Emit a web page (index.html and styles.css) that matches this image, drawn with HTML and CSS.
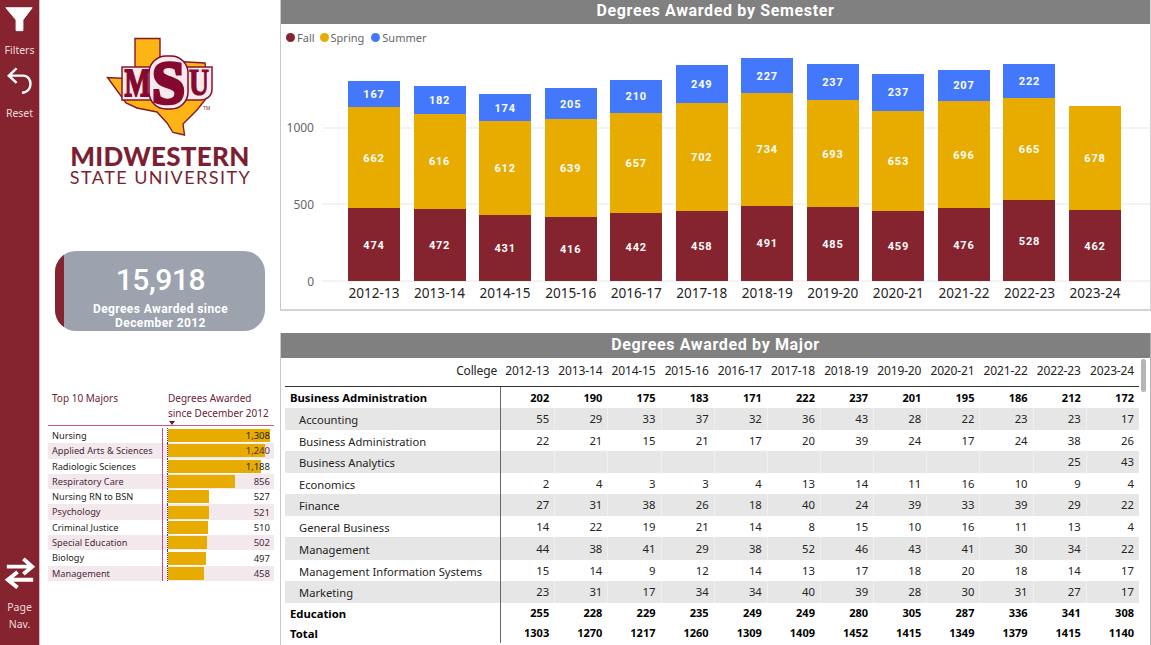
FILE: index.html
```html
<!DOCTYPE html>
<html lang="en">
<head>
<meta charset="utf-8">
<title>Degrees Awarded</title>
<link rel="stylesheet" href="styles.css">
</head>
<body>
<div class="page">
  <nav class="rail">
    <div class="rail-top">
      <svg class="ico-filter" viewBox="0 0 40 34"><path d="M6 7.500H33L23.500 20V31H16.500V20Z"/></svg>
      <span class="rail-text rail-filters">Filters</span>
      <svg class="ico-reset" viewBox="0 0 40 30"><path d="M17 2L9 9.500L17 17M9.500 9.500H23.500C34 9.500 34 27 22.500 27"/></svg>
      <span class="rail-text rail-reset">Reset</span>
    </div>
    <div class="rail-bottom">
      <svg class="ico-swap" viewBox="0 0 40 34"><path d="M7 11.500H33M24 3.500L33 11.500L24 19M34 25H8M18 17L8 25L18 33"/></svg>
      <span class="rail-text rail-page">Page</span>
      <span class="rail-text rail-nav">Nav.</span>
    </div>
  </nav>

  <aside class="left">
    <div class="logo">
      <svg class="logo-mark" viewBox="105 36 110 102">
        <path class="tx" d="M135 38.500H160V60L187 62L205 63L207 80L205 100L197 110L183 124L184.500 135L173 132.500L167 123L157 112L137 108L126 103L107.500 77.500L135 79Z"/>
        <path class="plate" d="M122 67H212V89C212 96 207 100 200 100H122Z"/>
        <text class="mk mk-m" x="124.500" y="96" textLength="26" lengthAdjust="spacingAndGlyphs">M</text>
        <text class="mk mk-u" x="189" y="95" textLength="20" lengthAdjust="spacingAndGlyphs">U</text>
        <rect class="s-back" x="149" y="56" width="39" height="53" rx="17"/>
        <text class="mk mk-s" x="152" y="103" textLength="33" lengthAdjust="spacingAndGlyphs">S</text>
        <text class="tm" x="203" y="110">TM</text>
      </svg>
      <div class="logo-name">MIDWESTERN</div>
      <div class="logo-sub">STATE UNIVERSITY</div>
    </div>

    <div class="kpi">
      <div class="kpi-stripe"></div>
      <div class="kpi-body">
        <div class="kpi-value">15,918</div>
        <div class="kpi-label">Degrees Awarded since<br>December 2012</div>
      </div>
    </div>

    <div class="top10">
      <div class="t-head">
        <div class="t-h1">Top 10 Majors</div>
        <div class="t-h2">Degrees Awarded<br>since December 2012<span class="sort"></span></div>
      </div>
      <div class="t-body">
        <div class="t-row"><span class="t-name">Nursing</span><span class="t-cell"><i class="t-bar" style="width:102px"></i><b class="t-num">1,308</b></span></div>
        <div class="t-row alt"><span class="t-name">Applied Arts &amp; Sciences</span><span class="t-cell"><i class="t-bar" style="width:96.500px"></i><b class="t-num">1,240</b></span></div>
        <div class="t-row"><span class="t-name">Radiologic Sciences</span><span class="t-cell"><i class="t-bar" style="width:93px"></i><b class="t-num">1,188</b></span></div>
        <div class="t-row alt"><span class="t-name">Respiratory Care</span><span class="t-cell"><i class="t-bar" style="width:67px"></i><b class="t-num">856</b></span></div>
        <div class="t-row"><span class="t-name">Nursing RN to BSN</span><span class="t-cell"><i class="t-bar" style="width:41px"></i><b class="t-num">527</b></span></div>
        <div class="t-row alt"><span class="t-name">Psychology</span><span class="t-cell"><i class="t-bar" style="width:40.600px"></i><b class="t-num">521</b></span></div>
        <div class="t-row"><span class="t-name">Criminal Justice</span><span class="t-cell"><i class="t-bar" style="width:39.800px"></i><b class="t-num">510</b></span></div>
        <div class="t-row alt"><span class="t-name">Special Education</span><span class="t-cell"><i class="t-bar" style="width:39px"></i><b class="t-num">502</b></span></div>
        <div class="t-row"><span class="t-name">Biology</span><span class="t-cell"><i class="t-bar" style="width:38px"></i><b class="t-num">497</b></span></div>
        <div class="t-row alt"><span class="t-name">Management</span><span class="t-cell"><i class="t-bar" style="width:35.500px"></i><b class="t-num">458</b></span></div>
      </div>
    </div>
  </aside>

  <main class="right">
    <section class="panel chart">
      <h2 class="title">Degrees Awarded by Semester</h2>
      <div class="legend">
        <span class="lg"><i class="dot fall"></i>Fall</span>
        <span class="lg"><i class="dot spring"></i>Spring</span>
        <span class="lg"><i class="dot summer"></i>Summer</span>
      </div>
      <div class="plot">
        <div class="grid-lines">
          <div class="gl"><span>1000</span><i></i></div>
          <div class="gl"><span>500</span><i></i></div>
          <div class="gl"><span>0</span><i></i></div>
        </div>
        <div class="bars">
          <div class="bar"><div class="seg summer" style="height:25.600px">167</div><div class="seg spring" style="height:101.500px">662</div><div class="seg fall" style="height:72.700px">474</div></div>
          <div class="bar"><div class="seg summer" style="height:27.900px">182</div><div class="seg spring" style="height:94.400px">616</div><div class="seg fall" style="height:72.400px">472</div></div>
          <div class="bar"><div class="seg summer" style="height:26.700px">174</div><div class="seg spring" style="height:93.800px">612</div><div class="seg fall" style="height:66.100px">431</div></div>
          <div class="bar"><div class="seg summer" style="height:31.400px">205</div><div class="seg spring" style="height:98px">639</div><div class="seg fall" style="height:63.800px">416</div></div>
          <div class="bar"><div class="seg summer" style="height:32.200px">210</div><div class="seg spring" style="height:100.700px">657</div><div class="seg fall" style="height:67.800px">442</div></div>
          <div class="bar"><div class="seg summer" style="height:38.200px">249</div><div class="seg spring" style="height:107.600px">702</div><div class="seg fall" style="height:70.200px">458</div></div>
          <div class="bar"><div class="seg summer" style="height:34.800px">227</div><div class="seg spring" style="height:112.500px">734</div><div class="seg fall" style="height:75.300px">491</div></div>
          <div class="bar"><div class="seg summer" style="height:36.300px">237</div><div class="seg spring" style="height:106.200px">693</div><div class="seg fall" style="height:74.400px">485</div></div>
          <div class="bar"><div class="seg summer" style="height:36.300px">237</div><div class="seg spring" style="height:100.100px">653</div><div class="seg fall" style="height:70.400px">459</div></div>
          <div class="bar"><div class="seg summer" style="height:31.700px">207</div><div class="seg spring" style="height:106.700px">696</div><div class="seg fall" style="height:73px">476</div></div>
          <div class="bar"><div class="seg summer" style="height:34px">222</div><div class="seg spring" style="height:101.900px">665</div><div class="seg fall" style="height:80.900px">528</div></div>
          <div class="bar"><div class="seg spring" style="height:103.900px">678</div><div class="seg fall" style="height:70.800px">462</div></div>
        </div>
      </div>
      <div class="xaxis">
        <span>2012-13</span><span>2013-14</span><span>2014-15</span><span>2015-16</span><span>2016-17</span><span>2017-18</span><span>2018-19</span><span>2019-20</span><span>2020-21</span><span>2021-22</span><span>2022-23</span><span>2023-24</span>
      </div>
    </section>

    <section class="panel matrix">
      <h2 class="title">Degrees Awarded by Major</h2>
      <div class="m-wrap">
        <table class="m-table">
          <colgroup><col class="c-label"><col span="12" class="c-num"></colgroup>
          <thead>
            <tr><th class="lab">College</th><th>2012-13</th><th>2013-14</th><th>2014-15</th><th>2015-16</th><th>2016-17</th><th>2017-18</th><th>2018-19</th><th>2019-20</th><th>2020-21</th><th>2021-22</th><th>2022-23</th><th>2023-24</th></tr>
          </thead>
          <tbody>
            <tr class="group r21"><td class="lab">Business Administration</td><td>202</td><td>190</td><td>175</td><td>183</td><td>171</td><td>222</td><td>237</td><td>201</td><td>195</td><td>186</td><td>212</td><td>172</td></tr>
            <tr class="shade r22"><td class="lab">Accounting</td><td>55</td><td>29</td><td>33</td><td>37</td><td>32</td><td>36</td><td>43</td><td>28</td><td>22</td><td>23</td><td>23</td><td>17</td></tr>
            <tr class="r21"><td class="lab">Business Administration</td><td>22</td><td>21</td><td>15</td><td>21</td><td>17</td><td>20</td><td>39</td><td>24</td><td>17</td><td>24</td><td>38</td><td>26</td></tr>
            <tr class="shade r22"><td class="lab">Business Analytics</td><td></td><td></td><td></td><td></td><td></td><td></td><td></td><td></td><td></td><td></td><td>25</td><td>43</td></tr>
            <tr class="r21"><td class="lab">Economics</td><td>2</td><td>4</td><td>3</td><td>3</td><td>4</td><td>13</td><td>14</td><td>11</td><td>16</td><td>10</td><td>9</td><td>4</td></tr>
            <tr class="shade r22"><td class="lab">Finance</td><td>27</td><td>31</td><td>38</td><td>26</td><td>18</td><td>40</td><td>24</td><td>39</td><td>33</td><td>39</td><td>29</td><td>22</td></tr>
            <tr class="r21"><td class="lab">General Business</td><td>14</td><td>22</td><td>19</td><td>21</td><td>14</td><td>8</td><td>15</td><td>10</td><td>16</td><td>11</td><td>13</td><td>4</td></tr>
            <tr class="shade r23"><td class="lab">Management</td><td>44</td><td>38</td><td>41</td><td>29</td><td>38</td><td>52</td><td>46</td><td>43</td><td>41</td><td>30</td><td>34</td><td>22</td></tr>
            <tr class="r21"><td class="lab">Management Information Systems</td><td>15</td><td>14</td><td>9</td><td>12</td><td>14</td><td>13</td><td>17</td><td>18</td><td>20</td><td>18</td><td>14</td><td>17</td></tr>
            <tr class="shade r22"><td class="lab">Marketing</td><td>23</td><td>31</td><td>17</td><td>34</td><td>34</td><td>40</td><td>39</td><td>28</td><td>30</td><td>31</td><td>27</td><td>17</td></tr>
            <tr class="group r20"><td class="lab">Education</td><td>255</td><td>228</td><td>229</td><td>235</td><td>249</td><td>249</td><td>280</td><td>305</td><td>287</td><td>336</td><td>341</td><td>308</td></tr>
            <tr class="group r20"><td class="lab">Total</td><td>1303</td><td>1270</td><td>1217</td><td>1260</td><td>1309</td><td>1409</td><td>1452</td><td>1415</td><td>1349</td><td>1379</td><td>1415</td><td>1140</td></tr>
          </tbody>
        </table>
        <div class="thumb"></div>
      </div>
    </section>
  </main>
</div>
</body>
</html>
```
FILE: styles.css
```css
* { box-sizing: border-box; }
html, body { margin: 0; padding: 0; background: #fff; }
body { font-family: "Noto Sans", "Open Sans", sans-serif; overflow: hidden; }
.page { display: flex; width: 1151px; height: 645px; overflow: hidden; }

/* rail */
.rail { width: 40px; height: 645px; flex: none; background: #85232f; border-right: 1px solid #d8b9bf; display: flex; flex-direction: column; justify-content: space-between; }
.rail-top, .rail-bottom { display: flex; flex-direction: column; align-items: center; }
.rail svg { width: 39px; display: block; flex: none; }
.ico-filter { height: 34px; fill: #fff; stroke: #fff; stroke-width: 1; stroke-linejoin: round; }
.ico-reset { height: 30px; margin-top: 9px; fill: none; stroke: #fff; stroke-width: 2.500; }
.ico-swap { height: 34px; fill: none; stroke: #fff; stroke-width: 4; }
.rail-text { color: #ecdcdc; font-size: 10.500px; line-height: 14px; white-space: nowrap; }
.rail-filters { margin-top: 9px; }
.rail-reset { margin-top: 10px; }
.rail-page { margin-top: 11px; }
.rail-nav { margin-top: 3px; margin-bottom: 14px; }

/* left */
.left { width: 240px; flex: none; display: flex; flex-direction: column; }
.logo { height: 211px; padding-top: 36px; display: flex; flex-direction: column; align-items: center; color: #7c1f33; }
.logo-mark { width: 110px; height: 102px; flex: none; margin-left: -1px; }
.tx { fill: #fdb515; stroke: #85182f; stroke-width: 1.400; }
.plate { fill: #f7e9ec; stroke: #85182f; stroke-width: 1.500; }
.s-back { fill: #f7e9ec; stroke: #85082f; stroke-width: 1.500; }
.mk { font-family: "Liberation Serif", serif; font-weight: 700; fill: #85082f; }
.mk-m { font-size: 40px; stroke: #85082f; stroke-width: 1.800; }
.mk-u { font-size: 38px; stroke: #85082f; stroke-width: 1.200; }
.mk-s { font-size: 62px; stroke: #85082f; stroke-width: 3.600; }
.tm { font-family: "Liberation Sans", sans-serif; font-size: 5px; fill: #85182f; }
.logo-name { font-family: "Lato", sans-serif; font-weight: 900; font-size: 26px; line-height: 24px; margin-top: 6px; letter-spacing: 0.300px; white-space: nowrap; }
.logo-sub { font-family: "Lato", sans-serif; font-weight: 400; font-size: 18px; line-height: 18px; letter-spacing: 1.450px; white-space: nowrap; margin-left: 1px; }

.kpi { width: 210px; height: 80px; flex: none; margin: 40px 0 0 15px; border-radius: 21px; background: #9ca3ae; color: #fff; text-align: center; font-family: "Roboto", sans-serif; display: flex; overflow: hidden; }
.kpi-stripe { width: 9px; flex: none; background: #85232f; }
.kpi-body { flex: 1; padding: 10px 8px 0 0; }
.kpi-value { font-size: 30px; font-weight: 500; line-height: 38px; letter-spacing: -0.400px; }
.kpi-label { font-size: 12px; font-weight: 700; line-height: 14px; letter-spacing: 0.400px; margin-top: 3px; }

.top10 { margin: 60px 0 0 8px; width: 226px; font-size: 10px; }
.t-head { display: flex; height: 35px; color: #6d2238; line-height: 15px; border-bottom: 1px solid #c65b83; }
.t-h1 { width: 120px; padding-left: 4px; }
.t-h2 { position: relative; white-space: nowrap; }
.sort { position: absolute; left: 0; bottom: 0; margin-left: 1px; width: 0; height: 0; border-left: 3px solid transparent; border-right: 3px solid transparent; border-top: 4px solid #5b1a2e; }
.t-body { display: flex; flex-direction: column; padding-top: 2px; }
.t-row { display: flex; height: 15.300px; align-items: stretch; color: #252423; }
.t-row.alt { background: #f3e8ec; color: #4a2a3c; }
.t-name { width: 115px; padding-left: 4px; border-right: 1.500px solid #c04f7c; line-height: 15px; white-space: nowrap; font-size: 9.200px; }
.t-cell { width: 103px; margin-left: 4px; border-left: 1px dotted #444; display: grid; align-items: center; }
.t-bar { grid-area: 1 / 1; height: 13px; background: #e8ab00; justify-self: start; }
.t-num { grid-area: 1 / 1; font-weight: 400; justify-self: end; font-size: 9.500px; line-height: 15px; }

/* right */
.right { width: 871px; flex: none; display: flex; flex-direction: column; gap: 22px; }
.panel { border-left: 1px solid #c8c8c8; }
.title { margin: 0; background: #808080; color: #fff; text-align: center; font-family: "Roboto", sans-serif; font-weight: 700; font-size: 16px; letter-spacing: 0.650px; white-space: nowrap; }

.chart { height: 311px; border-bottom: 2px solid #d4d4d4; border-right: 1px solid #d4d4d4; display: flex; flex-direction: column; }
.chart .title { height: 24px; line-height: 21px; flex: none; }
.legend { height: 26px; flex: none; display: flex; align-items: center; padding: 0 0 0 5px; font-size: 11px; color: #666; gap: 5px; }
.lg { display: flex; align-items: center; gap: 2px; }
.lg:last-child { margin-left: 2px; }
.dot { width: 9px; height: 9px; border-radius: 50%; display: block; }
.fall { background: #85232f; }
.spring { background: #e8ab00; }
.summer { background: #4478fc; }
.plot { height: 231px; flex: none; display: grid; }
.grid-lines, .bars { grid-area: 1 / 1; }
.grid-lines { display: flex; flex-direction: column; justify-content: flex-end; gap: 76.650px; }
.gl { height: 0; display: flex; align-items: center; }
.gl span { width: 33px; text-align: right; font-size: 12px; color: #666; flex: none; }
.gl i { flex: 1; height: 2px; background: #f3f3f3; margin-left: 8px; }
.bars { display: flex; align-items: flex-end; gap: 13.550px; padding-left: 67px; }
.bar { width: 52px; flex: none; display: flex; flex-direction: column; }
.seg { display: flex; align-items: center; justify-content: center; color: #fff; font-family: "Roboto", sans-serif; font-weight: 700; font-size: 11px; letter-spacing: 0.800px; padding-top: 1px; }
.xaxis { display: flex; gap: 13.550px; padding-left: 67px; margin-top: 2px; }
.xaxis span { width: 52px; flex: none; text-align: center; font-size: 13.600px; line-height: 20px; color: #252423; white-space: nowrap; }

.matrix { height: 312px; border-right: 1px solid #b4b4b4; display: flex; flex-direction: column; }
.matrix .title { height: 25px; line-height: 23px; flex: none; }
.m-wrap { display: flex; padding-left: 4px; }
.m-table { table-layout: fixed; width: 854px; flex: none; border-collapse: separate; border-spacing: 0; font-size: 11.300px; color: #252423; }
.c-label { width: 216px; }
.c-num { width: 53.170px; }
.m-table th { height: 29px; font-weight: 400; text-align: right; padding: 0 5px 4px 0; border-bottom: 1.500px solid #333; white-space: nowrap; font-size: 12px; letter-spacing: -0.150px; }
.m-table td { padding: 0 5px 1px 0; text-align: right; white-space: nowrap; }
.m-table td.lab { text-align: left; padding: 1px 0 0 14px; border-right: 1px solid #666; font-size: 11.200px; }
.m-table th.lab { padding-right: 4px; }
.shade td { background: #e6e6e6; }
.shade td + td + td { border-left: 1px solid #f0f0f0; }
.group td { font-weight: 700; color: #000; font-size: 11px; }
.m-table .group td.lab { padding-left: 5px; font-size: 11.300px; }
.m-table .group.r21 td.lab { padding-top: 0; padding-bottom: 1px; }
.r20 td { height: 20px; }
.r21 td { height: 21px; }
.r22 td { height: 22px; }
.r23 td { height: 23px; }
.thumb { width: 5px; height: 33px; flex: none; margin: 1px 0 0 2px; border-radius: 3px; background: #b5b5b5; }
```
